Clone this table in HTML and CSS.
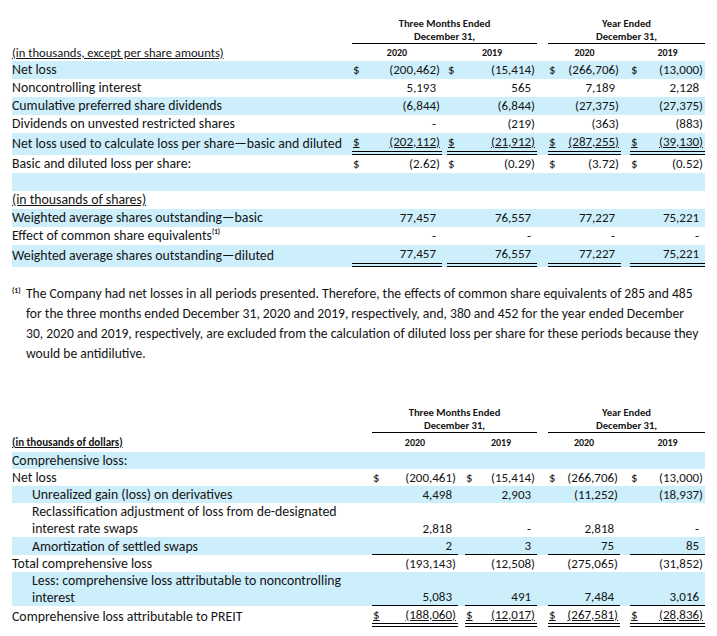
FILE: index.html
```html
<!DOCTYPE html>
<html lang="en">
<head>
<meta charset="utf-8">
<title>Loss per share and comprehensive loss</title>
<link rel="stylesheet" href="styles.css">
</head>
<body>
<table class="fin t1">
  <colgroup>
    <col class="w-label1"><col class="w-s4"><col class="w-90"><col class="w-s5"><col class="w-90"><col class="w-s11"><col class="w-73"><col class="w-s9"><col class="w-75">
  </colgroup>
  <tr class="hd">
    <td></td><td></td><td colspan="3" class="hc">Three Months Ended</td><td></td><td colspan="3" class="hc">Year Ended</td>
  </tr>
  <tr class="hd">
    <td></td><td></td><td colspan="3" class="hc rule">December 31,</td><td></td><td colspan="3" class="hc rule">December 31,</td>
  </tr>
  <tr class="yr">
    <td class="lab top"><span class="ul">(in thousands, except per share amounts)</span></td><td></td>
    <td class="yc">2020</td><td></td><td class="yc">2019</td><td></td><td class="yc">2020</td><td></td><td class="yc">2019</td>
  </tr>
  <tr class="b">
    <td class="lab">Net loss</td><td></td>
    <td class="v"><span class="d">$</span>(200,462)</td><td></td>
    <td class="v"><span class="d">$</span>(15,414)</td><td></td>
    <td class="v"><span class="d">$</span>(266,706)</td><td></td>
    <td class="v"><span class="d">$</span>(13,000)</td>
  </tr>
  <tr>
    <td class="lab">Noncontrolling interest</td><td></td>
    <td class="v"><span class="pos">5,193</span></td><td></td>
    <td class="v"><span class="pos">565</span></td><td></td>
    <td class="v"><span class="pos">7,189</span></td><td></td>
    <td class="v"><span class="pos">2,128</span></td>
  </tr>
  <tr class="b">
    <td class="lab">Cumulative preferred share dividends</td><td></td>
    <td class="v">(6,844)</td><td></td>
    <td class="v">(6,844)</td><td></td>
    <td class="v">(27,375)</td><td></td>
    <td class="v">(27,375)</td>
  </tr>
  <tr>
    <td class="lab">Dividends on unvested restricted shares</td><td></td>
    <td class="v"><span class="pos">-</span></td><td></td>
    <td class="v">(219)</td><td></td>
    <td class="v">(363)</td><td></td>
    <td class="v">(883)</td>
  </tr>
  <tr class="b dbl">
    <td class="lab">Net loss used to calculate loss per share—basic and diluted</td><td></td>
    <td class="v"><span class="d ul">$</span><span class="ul">(202,112)</span></td><td></td>
    <td class="v"><span class="d ul">$</span><span class="ul">(21,912)</span></td><td></td>
    <td class="v"><span class="d ul">$</span><span class="ul">(287,255)</span></td><td></td>
    <td class="v"><span class="d ul">$</span><span class="ul">(39,130)</span></td>
  </tr>
  <tr>
    <td class="lab">Basic and diluted loss per share:</td><td></td>
    <td class="v"><span class="d">$</span>(2.62)</td><td></td>
    <td class="v"><span class="d">$</span>(0.29)</td><td></td>
    <td class="v"><span class="d">$</span>(3.72)</td><td></td>
    <td class="v"><span class="d">$</span>(0.52)</td>
  </tr>
  <tr class="b">
    <td class="lab"></td><td></td><td></td><td></td><td></td><td></td><td></td><td></td><td></td>
  </tr>
  <tr>
    <td class="lab"><span class="ul">(in thousands of shares)</span></td><td></td><td></td><td></td><td></td><td></td><td></td><td></td><td></td>
  </tr>
  <tr class="b">
    <td class="lab">Weighted average shares outstanding—basic</td><td></td>
    <td class="v"><span class="pos">77,457</span></td><td></td>
    <td class="v"><span class="pos">76,557</span></td><td></td>
    <td class="v"><span class="pos">77,227</span></td><td></td>
    <td class="v"><span class="pos">75,221</span></td>
  </tr>
  <tr>
    <td class="lab">Effect of common share equivalents<sup class="fn">(1)</sup></td><td></td>
    <td class="v"><span class="pos">-</span></td><td></td>
    <td class="v"><span class="pos">-</span></td><td></td>
    <td class="v"><span class="pos">-</span></td><td></td>
    <td class="v"><span class="pos">-</span></td>
  </tr>
  <tr class="b dbl">
    <td class="lab">Weighted average shares outstanding—diluted</td><td></td>
    <td class="v"><span class="pos">77,457</span></td><td></td>
    <td class="v"><span class="pos">76,557</span></td><td></td>
    <td class="v"><span class="pos">77,227</span></td><td></td>
    <td class="v"><span class="pos">75,221</span></td>
  </tr>
</table>

<div class="note">
  <sup class="mark">(1)</sup>
  <p>The Company had net losses in all periods presented. Therefore, the effects of common share equivalents of 285 and 485<br>for the three months ended December 31, 2020 and 2019, respectively, and, 380 and 452 for the year ended December<br>30, 2020 and 2019, respectively, are excluded from the calculation of diluted loss per share for these periods because they<br>would be antidilutive.</p>
</div>

<table class="fin t2">
  <colgroup>
    <col class="w-label2"><col class="w-s4"><col class="w-86"><col class="w-s7"><col class="w-72"><col class="w-s11"><col class="w-72"><col class="w-s10"><col class="w-75">
  </colgroup>
  <tr class="hd">
    <td></td><td></td><td colspan="3" class="hc">Three Months Ended</td><td></td><td colspan="3" class="hc">Year Ended</td>
  </tr>
  <tr class="hd">
    <td></td><td></td><td colspan="3" class="hc rule">December 31,</td><td></td><td colspan="3" class="hc rule">December 31,</td>
  </tr>
  <tr class="yr">
    <td class="lab small"><span class="ul">(in thousands of dollars)</span></td><td></td>
    <td class="yc">2020</td><td></td><td class="yc">2019</td><td></td><td class="yc">2020</td><td></td><td class="yc">2019</td>
  </tr>
  <tr class="b">
    <td class="lab">Comprehensive loss:</td><td></td><td></td><td></td><td></td><td></td><td></td><td></td><td></td>
  </tr>
  <tr>
    <td class="lab">Net loss</td><td></td>
    <td class="v"><span class="d">$</span>(200,461)</td><td></td>
    <td class="v"><span class="d">$</span>(15,414)</td><td></td>
    <td class="v"><span class="d">$</span>(266,706)</td><td></td>
    <td class="v"><span class="d">$</span>(13,000)</td>
  </tr>
  <tr class="b">
    <td class="lab ind">Unrealized gain (loss) on derivatives</td><td></td>
    <td class="v"><span class="pos">4,498</span></td><td></td>
    <td class="v"><span class="pos">2,903</span></td><td></td>
    <td class="v">(11,252)</td><td></td>
    <td class="v">(18,937)</td>
  </tr>
  <tr class="two">
    <td class="lab ind">Reclassification adjustment of loss from de-designated<br>interest rate swaps</td><td></td>
    <td class="v"><span class="pos">2,818</span></td><td></td>
    <td class="v"><span class="pos">-</span></td><td></td>
    <td class="v"><span class="pos">2,818</span></td><td></td>
    <td class="v"><span class="pos">-</span></td>
  </tr>
  <tr class="b sgl">
    <td class="lab ind">Amortization of settled swaps</td><td></td>
    <td class="v"><span class="pos">2</span></td><td></td>
    <td class="v"><span class="pos">3</span></td><td></td>
    <td class="v"><span class="pos">75</span></td><td></td>
    <td class="v"><span class="pos">85</span></td>
  </tr>
  <tr>
    <td class="lab">Total comprehensive loss</td><td></td>
    <td class="v">(193,143)</td><td></td>
    <td class="v">(12,508)</td><td></td>
    <td class="v">(275,065)</td><td></td>
    <td class="v">(31,852)</td>
  </tr>
  <tr class="b two sgl">
    <td class="lab ind">Less: comprehensive loss attributable to noncontrolling<br>interest</td><td></td>
    <td class="v"><span class="pos">5,083</span></td><td></td>
    <td class="v"><span class="pos">491</span></td><td></td>
    <td class="v"><span class="pos">7,484</span></td><td></td>
    <td class="v"><span class="pos">3,016</span></td>
  </tr>
  <tr class="dbl">
    <td class="lab">Comprehensive loss attributable to PREIT</td><td></td>
    <td class="v"><span class="d ul">$</span><span class="ul">(188,060)</span></td><td></td>
    <td class="v"><span class="d ul">$</span><span class="ul">(12,017)</span></td><td></td>
    <td class="v"><span class="d ul">$</span><span class="ul">(267,581)</span></td><td></td>
    <td class="v"><span class="d ul">$</span><span class="ul">(28,836)</span></td>
  </tr>
</table>
</body>
</html>
```
FILE: styles.css
```css
html, body {
  margin: 0;
  background: #ffffff;
}
body {
  padding: 17px 0 0 12px;
  font-family: Carlito, Lato, "Open Sans", sans-serif;
  color: #141414;
}

.fin {
  border-collapse: separate;
  border-spacing: 0;
  table-layout: fixed;
  width: 693px;
  font-size: 13px;
}
.fin td {
  padding: 0;
  height: 18px;
  line-height: 18px;
  white-space: nowrap;
  vertical-align: middle;
  box-sizing: border-box;
}
.t2 td {
  height: 17px;
  line-height: 17px;
}

.w-label1 { width: 336px; }
.w-label2 { width: 356px; }
.w-s4 { width: 4px; }
.w-s5 { width: 5px; }
.w-s7 { width: 7px; }
.w-s9 { width: 9px; }
.w-s10 { width: 10px; }
.w-s11 { width: 11px; }
.w-90 { width: 90px; }
.w-86 { width: 86px; }
.w-73 { width: 73px; }
.w-72 { width: 72px; }
.w-75 { width: 75px; }

.fin tr.hd td {
  height: 13px;
  line-height: 13px;
}
.hc {
  text-align: center;
  font-size: 10.6px;
  font-weight: 700;
}
.yc {
  text-align: center;
  font-size: 10px;
  font-weight: 700;
}
.fin td.rule {
  border-bottom: 1px solid #000;
}
.fin tr.yr td {
  height: 17px;
  line-height: 16px;
}
.t2 tr.yr td {
  height: 19px;
  line-height: 19px;
}
.lab {
  padding-left: 1px;
  font-size: 13.8px;
  font-weight: 500;
}
.lab.top {
  font-size: 12.6px;
}
.lab.ind {
  padding-left: 20px;
}
.lab.small {
  font-size: 11px;
  font-weight: 700;
}
.ul {
  text-decoration: underline;
}

tr.b {
  background: #cdeefb;
}

.fin td.v {
  text-align: right;
  padding: 0 2px 0 1px;
  font-weight: 500;
}
.d {
  float: left;
}
.pos::after {
  content: ")";
  visibility: hidden;
}

.fin tr.dbl td.v {
  border-bottom: 4px double #000;
  height: 22px;
}
.t2 tr.dbl td.v {
  height: 21px;
}
.fin tr.sgl td.v {
  border-bottom: 1px solid #000;
}
.fin tr.two td {
  line-height: 17px;
  vertical-align: bottom;
}

.fn {
  font-size: 7px;
  font-weight: 700;
  line-height: 0;
}

.note {
  display: flex;
  margin: 17px 0 0 0;
  font-size: 13.6px;
  line-height: 20px;
  white-space: nowrap;
  font-weight: 500;
}
.note .mark {
  width: 14px;
  flex: none;
  font-size: 7.5px;
  font-weight: 700;
  line-height: 20px;
  position: relative;
  top: -3px;
}
.note p {
  margin: 0;
}

.t2 {
  margin-top: 42px;
}
```
